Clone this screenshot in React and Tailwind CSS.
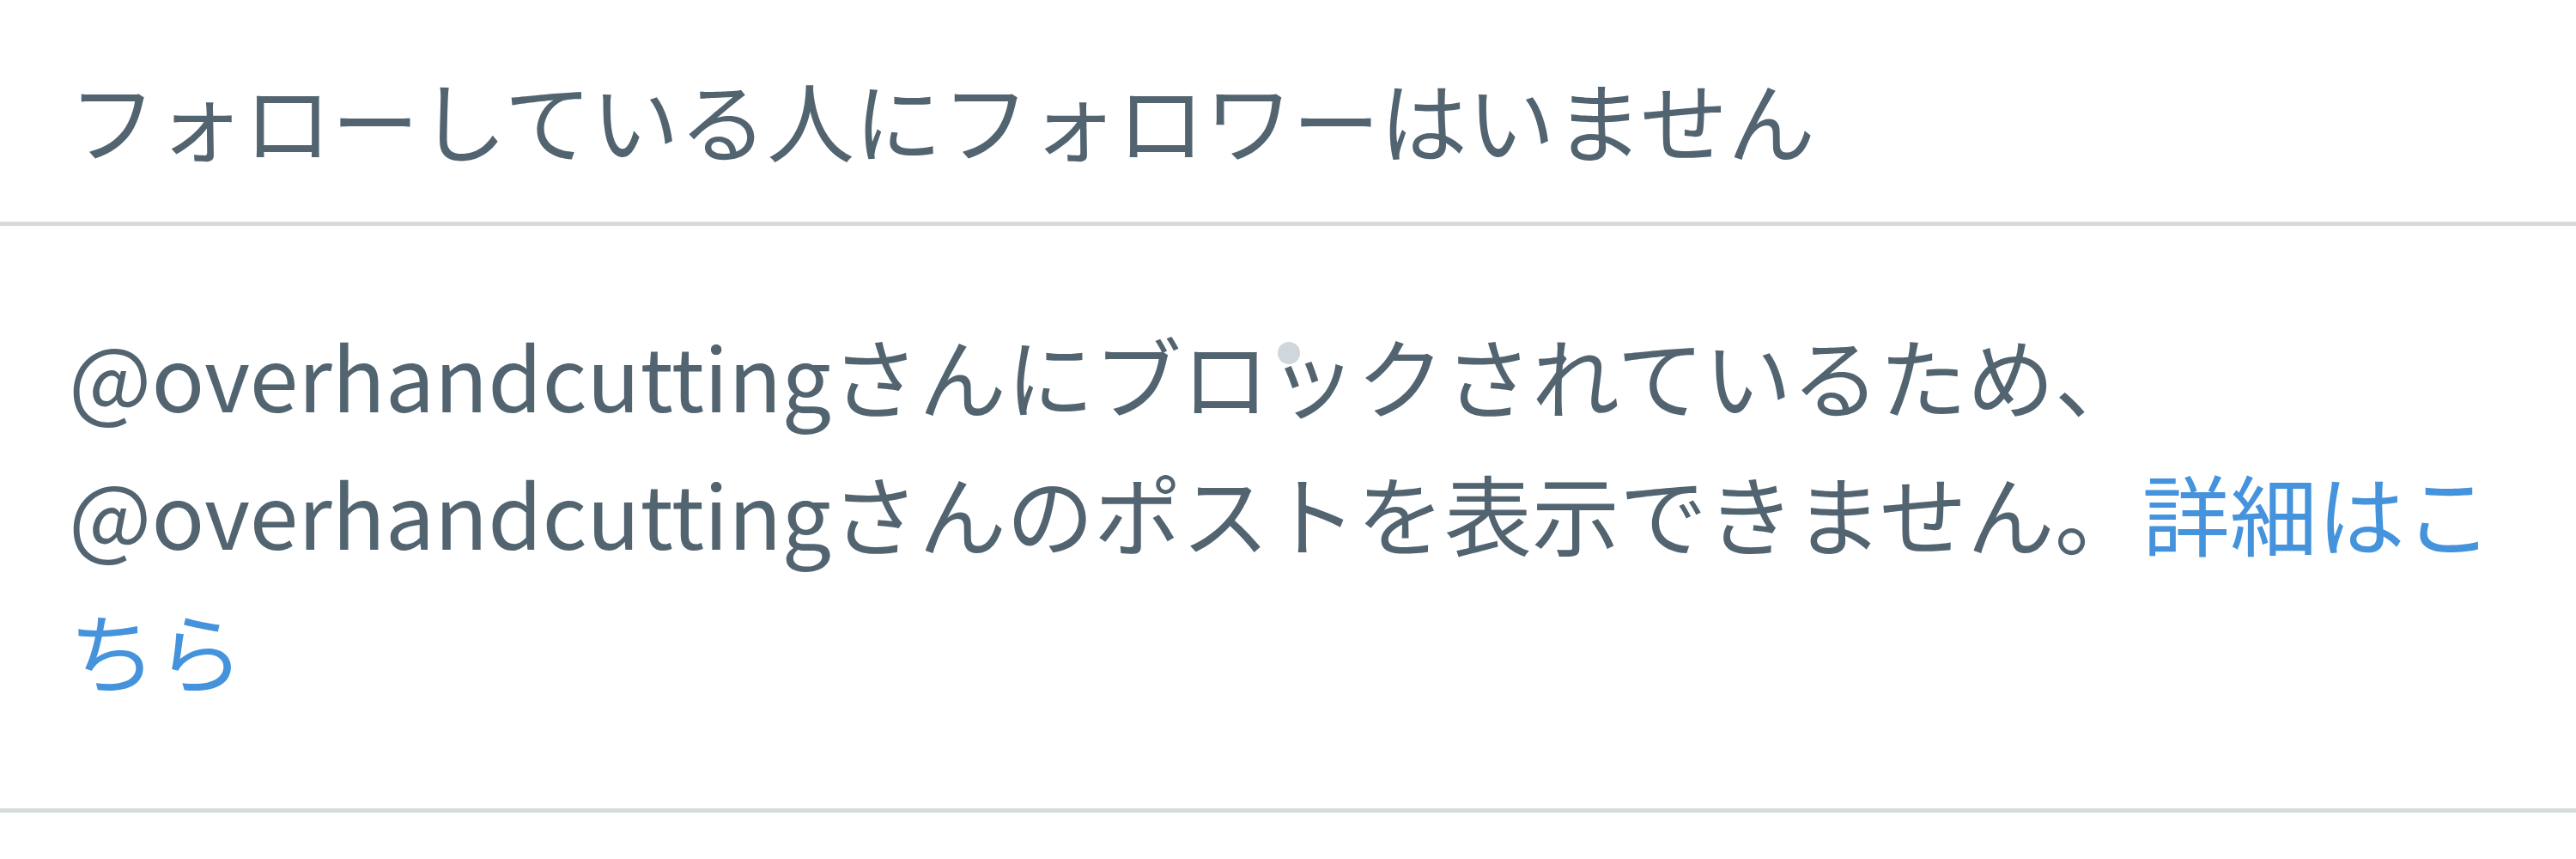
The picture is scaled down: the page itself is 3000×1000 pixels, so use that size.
export default function App() {
  return (
    <div
      className="w-[3000px] h-[1000px] bg-white text-[#536471] overflow-hidden"
      style={{ fontFamily: '"Noto Sans CJK JP", "Noto Sans", sans-serif' }}
    >
      {/* Empty followers-you-know state */}
      <div className="px-[80px] pt-[58px] pb-[40px] text-[102px] leading-[160px]">
        フォローしている人にフォロワーはいません
      </div>

      {/* Blocked notice */}
      <div className="relative border-t-[5px] border-t-[#d5dbde] border-b-[5px] border-b-[#d2dcdc] px-[80px] pt-[93px] pb-[105px] text-[102px] leading-[160px]">
        <p>
          @overhandcuttingさんにブロックされているため、
          <br />
          @overhandcuttingさんのポストを表示できません。
          <a className="text-[#4593dc]" href="#">
            詳細はこちら
          </a>
        </p>
        {/* touch indicator */}
        <span className="absolute left-[1488px] top-[135px] h-[26px] w-[26px] rounded-full bg-[#cfd6dc]" />
      </div>
    </div>
  );
}
